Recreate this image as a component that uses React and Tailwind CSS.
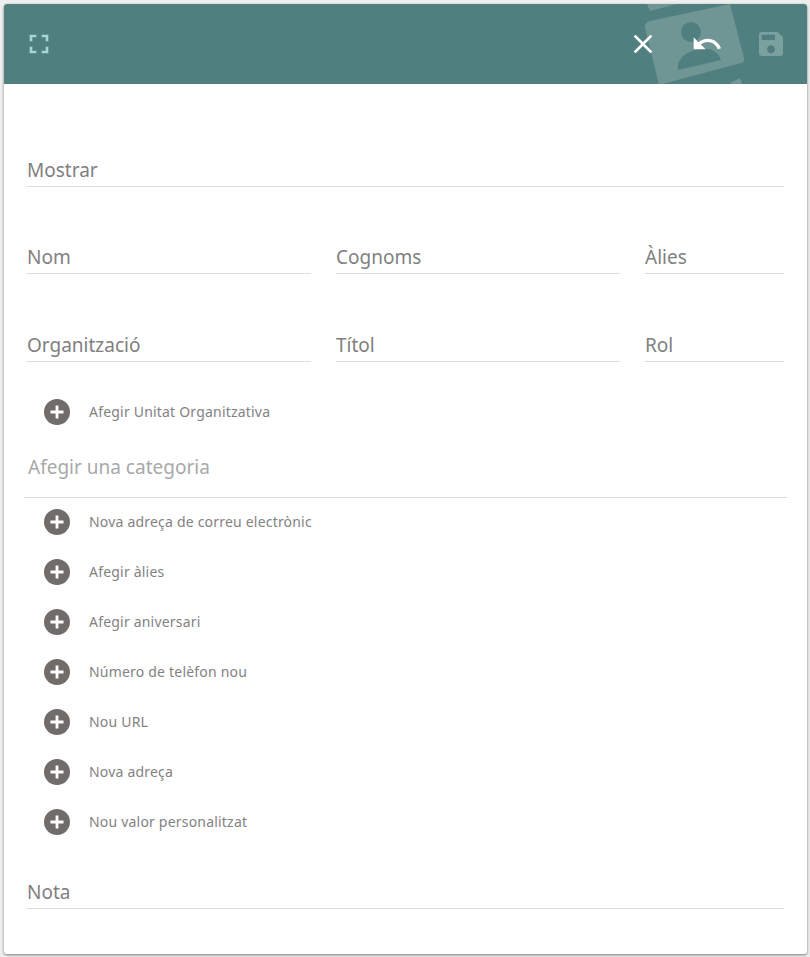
const addRows = ['Nova adreça de correu electrònic', 'Afegir àlies', 'Afegir aniversari', 'Número de telèfon nou', 'Nou URL', 'Nova adreça', 'Nou valor personalitzat']

const Icon = ({ d }) => (
  <svg viewBox="0 0 24 24" className="w-8 h-8 fill-current">
    <path d={d} />
  </svg>
)

const Field = ({ label, className = '' }) => (
  <div className={`border-b border-[#dddddd] h-[30px] text-[19px] leading-[27px] text-[#808080] ${className}`}>{label}</div>
)

const AddRow = ({ label }) => (
  <div className="flex items-center h-[50px] pl-[40px]">
    <span className="w-[26px] h-[26px] rounded-full bg-[#706c6a] flex items-center justify-center">
      <svg viewBox="0 0 16 16" className="w-4 h-4 fill-white">
        <path d="M6.6 1.5h2.8v5.1h5.1v2.8H9.4v5.1H6.6V9.4H1.5V6.6h5.1z" />
      </svg>
    </span>
    <span className="ml-[19px] pb-[2px] text-[14px] tracking-[0.2px] text-[#828282]">{label}</span>
  </div>
)

export default function App() {
  return (
    <div className="h-[957px] bg-[#efefef] pt-1 pl-1 pr-[3px] font-['Noto_Sans',sans-serif]">
      <div className="h-[950px] bg-white rounded-[3px] shadow-[0_1px_3px_rgba(0,0,0,0.5)] overflow-hidden">
        {/* Header */}
        <header className="relative h-20 bg-[#4f7f7f] flex items-center overflow-hidden">
          <svg viewBox="0 0 163 80" className="absolute left-[636px] top-0 w-[163px] h-20 text-[#6f9595] fill-current">
            <g transform="translate(0 -4)">
              <path d="M7 4h30L10 11z" />
              <path d="M10 21 90 4l14 54q1 4-3 5L19 85 5 28q-1-5 5-7z" />
              <path d="M90 83l10-5 2 6H92z" />
              <circle cx="51" cy="32" r="10" fill="#4f7f7f" />
              <path d="M38 70C36 56 52 49 63 49c9-1 15 3 18 11z" fill="#4f7f7f" />
            </g>
          </svg>
          <button className="relative w-16 h-16 ml-[3px] flex items-center justify-center text-[#a8d4d4]">
            <Icon d="M7 14H5v5h5v-2H7v-3zm-2-4h2V7h3V5H5v5zm12 7h-3v2h5v-5h-2v3zM14 5v2h3v3h2V5h-5z" />
          </button>
          <div className="relative ml-auto mr-[4px] flex">
            <button className="w-[65px] h-16 flex items-center justify-center text-white">
              <Icon d="M19 6.41 17.59 5 12 10.59 6.41 5 5 6.41 10.59 12 5 17.59 6.41 19 12 13.41 17.59 19 19 17.59 13.41 12z" />
            </button>
            <button className="w-16 h-16 flex items-center justify-center text-white">
              <Icon d="M12.5 8c-2.65 0-5.05.99-6.9 2.6L2 7v9h9l-3.62-3.62c1.39-1.16 3.16-1.88 5.12-1.88 3.54 0 6.55 2.31 7.6 5.5l2.37-.78C21.08 11.03 17.15 8 12.5 8z" />
            </button>
            <button className="w-16 h-16 flex items-center justify-center text-[#7ba0a0]">
              <Icon d="M17 3H5c-1.11 0-2 .9-2 2v14c0 1.1.89 2 2 2h14c1.1 0 2-.9 2-2V7l-4-4zm-5 16c-1.66 0-3-1.34-3-3s1.34-3 3-3 3 1.34 3 3-1.34 3-3 3zm3-10H5V5h10v4z" />
            </button>
          </div>
        </header>

        {/* Name fields */}
        <div className="px-[23px] pt-[73px]">
          <Field label="Mostrar" />
          <div className="flex gap-[25px] mt-[57px]">
            <Field label="Nom" className="w-[284px]" />
            <Field label="Cognoms" className="w-[284px]" />
            <Field label="Àlies" className="flex-1" />
          </div>
          <div className="flex gap-[25px] mt-[58px]">
            <Field label="Organització" className="w-[284px]" />
            <Field label="Títol" className="w-[284px]" />
            <Field label="Rol" className="flex-1" />
          </div>
        </div>

        <div className="mt-[25px]">
          <AddRow label="Afegir Unitat Organitzativa" />
        </div>

        {/* Category */}
        <div className="mx-[20px] h-[61px] border-b border-[#dddddd] pl-1 pt-[15px] text-[19px] leading-[30px] text-[#a8a8a8]">
          Afegir una categoria
        </div>

        <div className="mt-[-1px]">
          {addRows.map((label) => (
            <AddRow key={label} label={label} />
          ))}
        </div>

        <div className="px-[23px] mt-[32px]">
          <Field label="Nota" />
        </div>
      </div>
    </div>
  )
}
